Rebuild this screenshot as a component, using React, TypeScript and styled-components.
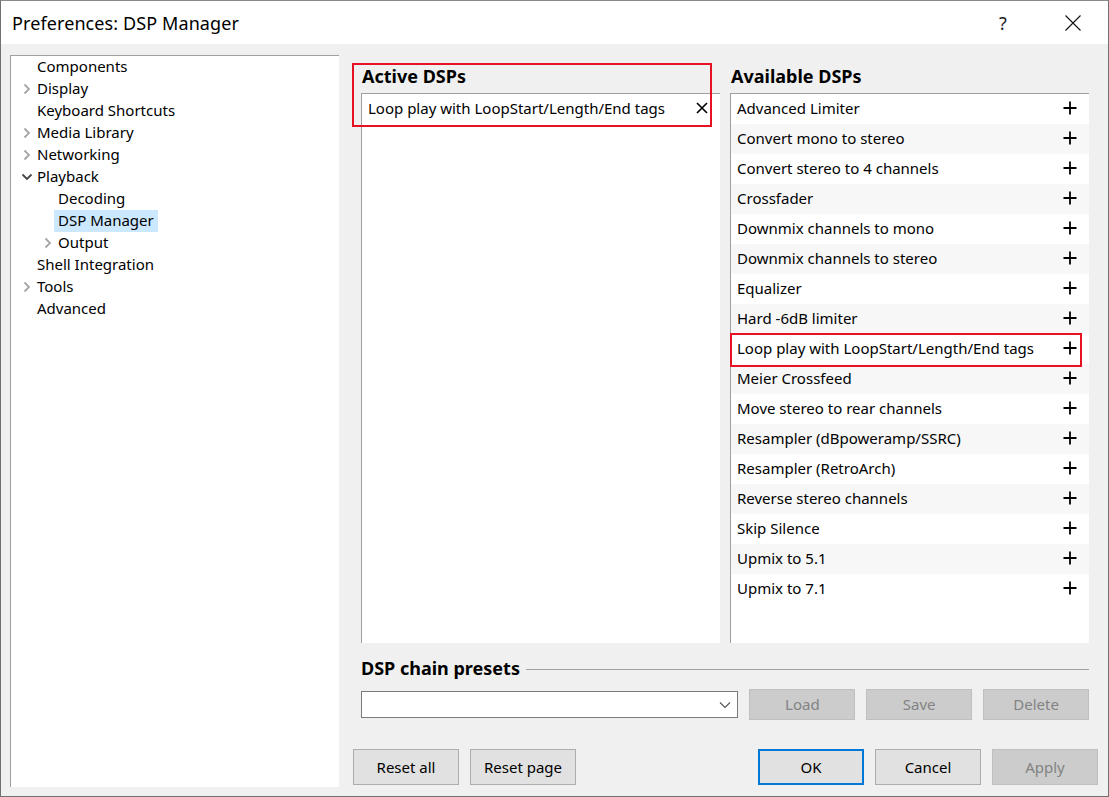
import React from 'react';
import styled, { createGlobalStyle } from 'styled-components';

const GlobalStyle = createGlobalStyle`
    html, body {
        margin: 0;
        padding: 0;
        background: #f0f0f0;
    }
    body {
        font-family: 'Noto Sans', 'Open Sans', sans-serif;
        color: #000;
    }
`;

const tree = [
    { label: 'Components', level: 0, chevron: 'none' },
    { label: 'Display', level: 0, chevron: 'right' },
    { label: 'Keyboard Shortcuts', level: 0, chevron: 'none' },
    { label: 'Media Library', level: 0, chevron: 'right' },
    { label: 'Networking', level: 0, chevron: 'right' },
    { label: 'Playback', level: 0, chevron: 'down' },
    { label: 'Decoding', level: 1, chevron: 'none' },
    { label: 'DSP Manager', level: 1, chevron: 'none', selected: true },
    { label: 'Output', level: 1, chevron: 'right' },
    { label: 'Shell Integration', level: 0, chevron: 'none' },
    { label: 'Tools', level: 0, chevron: 'right' },
    { label: 'Advanced', level: 0, chevron: 'none' },
];

const available = [
    'Advanced Limiter',
    'Convert mono to stereo',
    'Convert stereo to 4 channels',
    'Crossfader',
    'Downmix channels to mono',
    'Downmix channels to stereo',
    'Equalizer',
    'Hard -6dB limiter',
    'Loop play with LoopStart/Length/End tags',
    'Meier Crossfeed',
    'Move stereo to rear channels',
    'Resampler (dBpoweramp/SSRC)',
    'Resampler (RetroArch)',
    'Reverse stereo channels',
    'Skip Silence',
    'Upmix to 5.1',
    'Upmix to 7.1',
];

const Window = styled.div`
    width: 1109px;
    height: 797px;
    box-sizing: border-box;
    border: 1px solid #707070;
    border-top-color: #8a8a8a;
    background: #f0f0f0;
    display: flex;
    flex-direction: column;
    overflow: hidden;
`;

const TitleBar = styled.div`
    height: 43px;
    background: #fff;
    display: flex;
    align-items: center;
    padding-left: 11px;
`;

const Title = styled.div`
    flex: 1;
    font-size: 18px;
    letter-spacing: 0.1px;
`;

const TitleButton = styled.div`
    width: 70px;
    height: 43px;
    display: flex;
    align-items: center;
    justify-content: center;
    font-size: 18px;
    color: #222;
`;

const Body = styled.div`
    flex: 1;
    display: flex;
    padding: 11px 10px 9px 9px;
    min-height: 0;
`;

const TreePanel = styled.div`
    width: 329px;
    background: #fff;
    border-top: 1px solid #a0a0a0;
    border-left: 1px solid #a0a0a0;
    box-sizing: border-box;
`;

const TreeItem = styled.div<{ $level: number }>`
    height: 22px;
    display: flex;
    align-items: center;
    padding-left: ${p => 5 + p.$level * 21}px;
    font-size: 15px;
`;

const ChevronSlot = styled.div`
    width: 21px;
    height: 22px;
    display: flex;
    align-items: center;
    justify-content: center;
`;

const TreeLabel = styled.span<{ $selected?: boolean }>`
    padding: 0 4px 1px 4px;
    margin-left: -4px;
    line-height: 21px;
    background: ${p => (p.$selected ? '#cce8ff' : 'transparent')};
`;

const Main = styled.div`
    flex: 1;
    display: flex;
    flex-direction: column;
    padding-left: 14px;
    min-width: 0;
`;

const DspArea = styled.div`
    display: grid;
    grid-template-columns: 359px 359px;
    column-gap: 10px;
    padding-left: 8px;
`;

const Column = styled.div`
    position: relative;
    display: flex;
    flex-direction: column;
`;

const SectionHeader = styled.div`
    height: 38px;
    display: flex;
    align-items: center;
    padding-left: 1px;
    padding-top: 4px;
    box-sizing: border-box;
    font-size: 18px;
    font-weight: 700;
`;

const ListBox = styled.div`
    height: 550px;
    background: #fff;
    border-top: 1px solid #a0a0a0;
    border-left: 1px solid #a0a0a0;
    box-sizing: border-box;
`;

const Row = styled.div<{ $alt?: boolean; $marked?: boolean }>`
    position: relative;
    height: 30px;
    box-sizing: border-box;
    display: flex;
    align-items: center;
    padding: 0 12px 2px 6px;
    font-size: 15px;
    background: ${p => (p.$alt ? '#f7f7f7' : '#fff')};
    ${p =>
        p.$marked &&
        `
        z-index: 1;
        &::after {
            content: '';
            position: absolute;
            left: -1px;
            top: -1px;
            width: 352px;
            height: 34px;
            box-sizing: border-box;
            border: 2px solid #e81123;
        }
    `}
`;

const RowLabel = styled.span`
    flex: 1;
    white-space: nowrap;
`;

const Annotation = styled.div`
    position: absolute;
    left: -9px;
    top: 8px;
    width: 360px;
    height: 64px;
    box-sizing: border-box;
    border: 2px solid #e81123;
    pointer-events: none;
`;

const Presets = styled.div`
    padding: 0 9px 0 8px;
`;

const PresetsHeader = styled.div`
    display: flex;
    align-items: center;
    height: 26px;
    margin-top: 12px;
    font-size: 18px;
    font-weight: 700;
    gap: 6px;
    &::after {
        content: '';
        flex: 1;
        height: 1px;
        background: #a0a0a0;
        margin-top: 2px;
    }
`;

const PresetsRow = styled.div`
    display: flex;
    align-items: center;
    gap: 11px;
    margin-top: 8px;
`;

const Combo = styled.div`
    width: 378px;
    height: 27px;
    box-sizing: border-box;
    background: #fff;
    border: 1px solid #7a7a7a;
    display: flex;
    align-items: center;
    justify-content: flex-end;
    padding-right: 6px;
`;

const Button = styled.div<{ $disabled?: boolean; $default?: boolean; $tall?: boolean }>`
    width: 106px;
    height: ${p => (p.$tall ? 36 : 31)}px;
    box-sizing: border-box;
    display: flex;
    align-items: center;
    justify-content: center;
    padding-bottom: 1px;
    font-size: 15px;
    background: ${p => (p.$disabled ? '#cccccc' : '#e1e1e1')};
    color: ${p => (p.$disabled ? '#838383' : '#000')};
    border: ${p =>
        p.$default ? '2px solid #0078d7' : p.$disabled ? '1px solid #bfbfbf' : '1px solid #adadad'};
`;

const Footer = styled.div`
    display: flex;
    gap: 11px;
    margin-top: auto;
    padding-bottom: 2px;
`;

const Spacer = styled.div`
    flex: 1;
`;

const Chevron = ({ dir }: { dir: string }) => {
    if (dir === 'none') return null;
    if (dir === 'down') {
        return (
            <svg width="12" height="12" viewBox="0 0 12 12">
                <polyline points="1.5,3.5 6,8 10.5,3.5" fill="none" stroke="#444" strokeWidth="1.8" />
            </svg>
        );
    }
    return (
        <svg width="12" height="12" viewBox="0 0 12 12">
            <polyline points="3.5,1.5 8,6 3.5,10.5" fill="none" stroke="#a6a6a6" strokeWidth="1.8" />
        </svg>
    );
};

const PlusIcon = () => (
    <svg width="14" height="14" viewBox="0 0 14 14">
        <path d="M7 0.5V13.5M0.5 7H13.5" stroke="#000" strokeWidth="1.8" />
    </svg>
);

const RemoveIcon = () => (
    <svg width="12" height="12" viewBox="0 0 12 12">
        <path d="M1 1L11 11M11 1L1 11" stroke="#000" strokeWidth="1.6" />
    </svg>
);

const CloseIcon = () => (
    <svg width="16" height="16" viewBox="0 0 16 16">
        <path d="M0.5 0.5L15.5 15.5M15.5 0.5L0.5 15.5" stroke="#111" strokeWidth="1.1" />
    </svg>
);

const ComboArrow = () => (
    <svg width="12" height="8" viewBox="0 0 12 8">
        <polyline points="1,1.5 6,6.5 11,1.5" fill="none" stroke="#555" strokeWidth="1.1" />
    </svg>
);

const App = () => (
    <>
        <GlobalStyle />
        <Window>
            <TitleBar>
                <Title>Preferences: DSP Manager</Title>
                <TitleButton>?</TitleButton>
                <TitleButton>
                    <CloseIcon />
                </TitleButton>
            </TitleBar>
            <Body>
                <TreePanel>
                    {tree.map(item => (
                        <TreeItem key={item.label} $level={item.level}>
                            <ChevronSlot>
                                <Chevron dir={item.chevron} />
                            </ChevronSlot>
                            <TreeLabel $selected={item.selected}>{item.label}</TreeLabel>
                        </TreeItem>
                    ))}
                </TreePanel>
                <Main>
                    <DspArea>
                        <Column>
                            <SectionHeader>Active DSPs</SectionHeader>
                            <ListBox>
                                <Row>
                                    <RowLabel>Loop play with LoopStart/Length/End tags</RowLabel>
                                    <RemoveIcon />
                                </Row>
                            </ListBox>
                            <Annotation />
                        </Column>
                        <Column>
                            <SectionHeader>Available DSPs</SectionHeader>
                            <ListBox>
                                {available.map((name, i) => (
                                    <Row key={name} $alt={i % 2 === 1} $marked={name.startsWith('Loop play')}>
                                        <RowLabel>{name}</RowLabel>
                                        <PlusIcon />
                                    </Row>
                                ))}
                            </ListBox>
                        </Column>
                    </DspArea>
                    <Presets>
                        <PresetsHeader>DSP chain presets</PresetsHeader>
                        <PresetsRow>
                            <Combo>
                                <ComboArrow />
                            </Combo>
                            <Button $disabled>Load</Button>
                            <Button $disabled>Save</Button>
                            <Button $disabled>Delete</Button>
                        </PresetsRow>
                    </Presets>
                    <Footer>
                        <Button $tall>Reset all</Button>
                        <Button $tall>Reset page</Button>
                        <Spacer />
                        <Button $tall $default>OK</Button>
                        <Button $tall>Cancel</Button>
                        <Button $tall $disabled>Apply</Button>
                    </Footer>
                </Main>
            </Body>
        </Window>
    </>
);

export default App;
